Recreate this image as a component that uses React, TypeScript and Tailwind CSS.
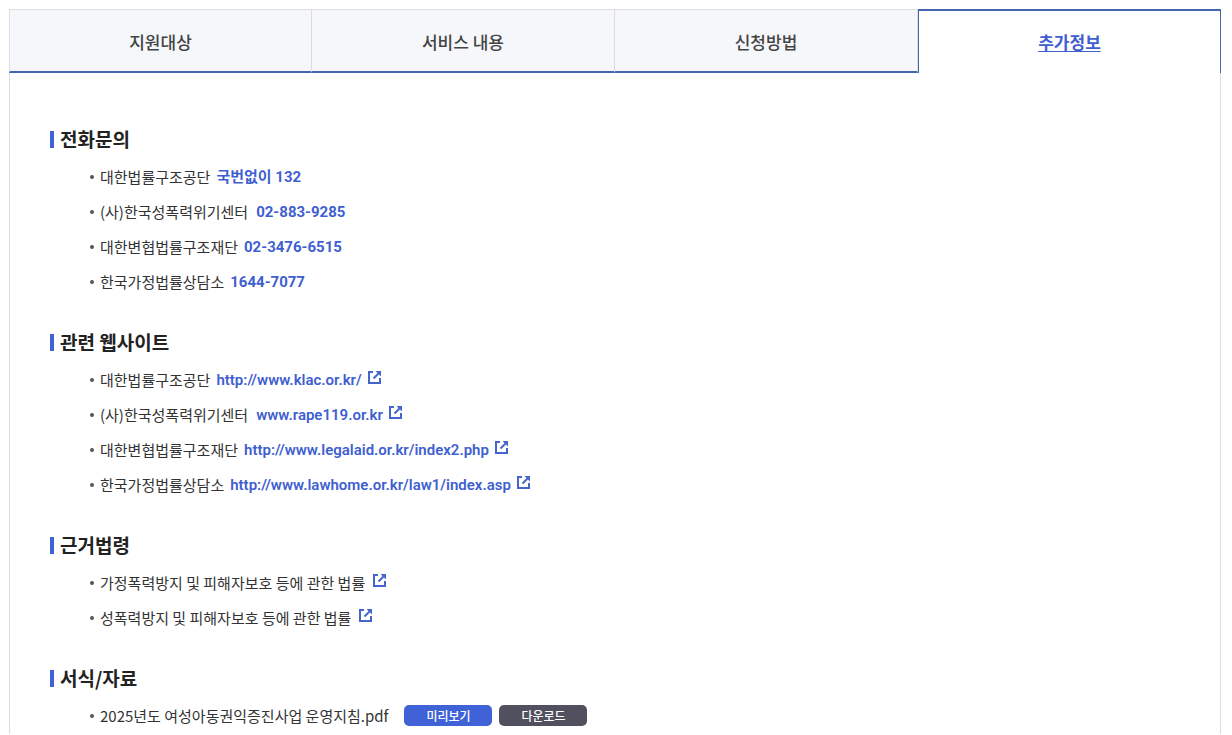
import {FC, ReactNode} from "react";

interface TabProps {
    label: string;
    active?: boolean;
}

const Tab: FC<TabProps> = ({label, active = false}) => (
    <button
        type="button"
        role="tab"
        aria-selected={active}
        className={
            active
                ? "h-16 w-1/4 border-x border-t-2 border-[#4565b0] bg-white text-[17px] font-bold text-[#3f5fd0] underline underline-offset-2"
                : "h-16 w-1/4 border-t border-r border-b-2 border-t-[#ddd] border-r-[#ddd] border-b-[#4565b0] bg-[#f5f7fb] pt-0.5 text-[17px] font-medium text-[#444] first:border-l first:border-l-[#ddd]"
        }
    >
        {label}
    </button>
);

const ExternalIcon: FC = () => (
    <svg
        viewBox="0 0 13 13"
        className="mb-1 h-[13px] w-[13px] shrink-0"
        fill="none"
        stroke="#4565cc"
        strokeWidth="2"
        aria-hidden="true"
    >
        <path d="M5 1H1v11h11V7" />
        <path d="M5.5 7.5l5-5" />
        <path d="M7.5 0H13v5.5z" fill="#4565cc" stroke="none" />
    </svg>
);

interface SectionProps {
    title: string;
    children: ReactNode;
}

const Section: FC<SectionProps> = ({title, children}) => (
    <section className="mb-[29px] last:mb-0">
        <h2 className="flex h-7 items-center gap-1.5 text-[19px] leading-7 font-bold text-[#222]">
            <span className="h-[17px] w-1 bg-[#3f63d6]" />
            {title}
        </h2>
        <ul className="mt-1.5 pl-10">{children}</ul>
    </section>
);

const Item: FC<{ children: ReactNode }> = ({children}) => (
    <li className="flex h-[35px] items-center text-[15px] leading-6 text-[#333]">
        <span className="mr-1.5 h-1 w-1 rounded-full bg-[#555]" />
        {children}
    </li>
);

const phones = [
    {name: "대한법률구조공단", tel: "국번없이 132", href: "tel:132"},
    {name: "(사)한국성폭력위기센터", tel: "02-883-9285", href: "tel:02-883-9285", wide: true},
    {name: "대한변협법률구조재단", tel: "02-3476-6515", href: "tel:02-3476-6515"},
    {name: "한국가정법률상담소", tel: "1644-7077", href: "tel:1644-7077"},
];

const sites = [
    {name: "대한법률구조공단", text: "http://www.klac.or.kr/", href: "http://www.klac.or.kr/"},
    {name: "(사)한국성폭력위기센터", text: "www.rape119.or.kr", href: "http://www.rape119.or.kr", wide: true},
    {name: "대한변협법률구조재단", text: "http://www.legalaid.or.kr/index2.php", href: "http://www.legalaid.or.kr/index2.php"},
    {name: "한국가정법률상담소", text: "http://www.lawhome.or.kr/law1/index.asp", href: "http://www.lawhome.or.kr/law1/index.asp"},
];

const laws = [
    "가정폭력방지 및 피해자보호 등에 관한 법률",
    "성폭력방지 및 피해자보호 등에 관한 법률",
];

export default function App() {
    return (
        <div className="pt-[9px] pr-[11px] pl-[9px] font-['Noto_Sans_CJK_KR',sans-serif]">
            <div role="tablist" className="flex">
                <Tab label="지원대상" />
                <Tab label="서비스 내용" />
                <Tab label="신청방법" />
                <Tab label="추가정보" active />
            </div>

            <div className="border-x border-[#ddd] px-10 pt-[52px] pb-px">
                <Section title="전화문의">
                    {phones.map((p) => (
                        <Item key={p.name}>
                            <span>{p.name}</span>
                            <a
                                href={p.href}
                                className={`${p.wide ? "ml-2" : "ml-1.5"} font-['Roboto','Noto_Sans_CJK_KR',sans-serif] font-bold text-[#3f5fd0]`}
                            >
                                {p.tel}
                            </a>
                        </Item>
                    ))}
                </Section>

                <Section title="관련 웹사이트">
                    {sites.map((s) => (
                        <Item key={s.name}>
                            <span>{s.name}</span>
                            <a
                                href={s.href}
                                className={`${s.wide ? "ml-2" : "ml-1.5"} flex items-center gap-1.5 font-['Roboto','Noto_Sans_CJK_KR',sans-serif] font-semibold text-[#3f5fd0]`}
                            >
                                {s.text}
                                <ExternalIcon />
                            </a>
                        </Item>
                    ))}
                </Section>

                <Section title="근거법령">
                    {laws.map((law) => (
                        <Item key={law}>
                            <a href="#law" className="flex items-center gap-2">
                                {law}
                                <ExternalIcon />
                            </a>
                        </Item>
                    ))}
                </Section>

                <Section title="서식/자료">
                    <Item>
                        <span>2025년도 여성아동권익증진사업 운영지침.pdf</span>
                        <button type="button" className="ml-4 h-[21px] w-[88px] rounded-[5px] bg-[#3f63d6] text-xs font-medium text-white">
                            미리보기
                        </button>
                        <button type="button" className="ml-[7px] h-[21px] w-[88px] rounded-[5px] bg-[#51505f] text-xs font-medium text-white">
                            다운로드
                        </button>
                    </Item>
                </Section>
            </div>
        </div>
    );
}
